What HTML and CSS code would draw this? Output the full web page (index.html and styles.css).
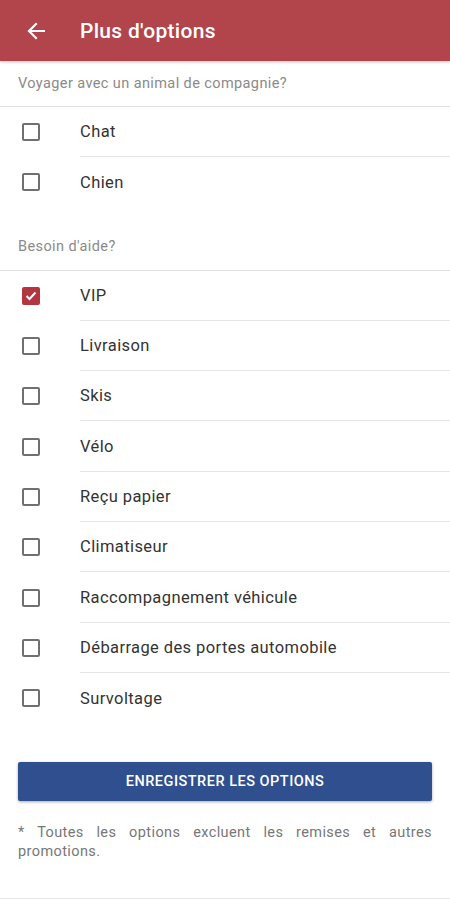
FILE: index.html
```html
<!DOCTYPE html>
<html lang="fr">
<head>
<meta charset="utf-8">
<title>Plus d'options</title>
<link rel="stylesheet" href="styles.css">
</head>
<body>
<header class="appbar">
  <span class="back">
    <svg width="18" height="18" viewBox="0 0 18 18"><path d="M17 9H2.5M9 2L2 9l7 7" fill="none" stroke="#fff" stroke-width="2.2" stroke-linecap="square"/></svg>
  </span>
  <h1 class="title">Plus d'options</h1>
</header>

<div class="section-title first">Voyager avec un animal de compagnie?</div>
<ul class="list">
  <li class="row"><span class="cb"></span><span class="label">Chat</span></li>
  <li class="row"><span class="cb"></span><span class="label">Chien</span></li>
</ul>

<div class="section-title second">Besoin d'aide?</div>
<ul class="list">
  <li class="row"><span class="cb checked"><svg width="12" height="10" viewBox="0 0 12 10"><path d="M1.5 5l3 3 6-6.5" fill="none" stroke="#fff" stroke-width="2"/></svg></span><span class="label">VIP</span></li>
  <li class="row"><span class="cb"></span><span class="label">Livraison</span></li>
  <li class="row"><span class="cb"></span><span class="label">Skis</span></li>
  <li class="row"><span class="cb"></span><span class="label">Vélo</span></li>
  <li class="row"><span class="cb"></span><span class="label">Reçu papier</span></li>
  <li class="row"><span class="cb"></span><span class="label">Climatiseur</span></li>
  <li class="row"><span class="cb"></span><span class="label">Raccompagnement véhicule</span></li>
  <li class="row"><span class="cb"></span><span class="label">Débarrage des portes automobile</span></li>
  <li class="row"><span class="cb"></span><span class="label">Survoltage</span></li>
</ul>

<button class="save">ENREGISTRER LES OPTIONS</button>
<p class="note">* Toutes les options excluent les remises et autres promotions.</p>
<div class="bottom-line"></div>
</body>
</html>
```

FILE: styles.css
```css
html, body {
  margin: 0;
  padding: 0;
  background: #fff;
  font-family: Roboto, "Liberation Sans", sans-serif;
}
.appbar {
  height: 61px;
  background: #b1454b;
  display: flex;
  align-items: center;
  box-shadow: 0 1px 3px rgba(0,0,0,0.25);
  position: relative;
}
.back {
  width: 80px;
  display: flex;
  justify-content: flex-start;
  padding-left: 27px;
  box-sizing: border-box;
  height: 18px;
}
.title {
  margin: 0;
  color: #fff;
  font-size: 21px;
  letter-spacing: 0.3px;
  font-weight: 500;
}
.section-title {
  height: 46px;
  box-sizing: border-box;
  display: flex;
  align-items: center;
  padding-left: 18px;
  font-size: 14.5px;
  letter-spacing: 0.4px;
  color: #8a8a8a;
  border-bottom: 1px solid #e2e2e2;
}
.section-title.second {
  margin-top: 16px;
  height: 47px;
}
.list {
  list-style: none;
  margin: 0;
  padding: 0;
}
.row {
  height: 50.3px;
  display: flex;
}
.cb {
  width: 18px;
  height: 18px;
  box-sizing: border-box;
  border: 2px solid #707070;
  border-radius: 2px;
  margin: auto 22px auto 22px;
  display: flex;
  align-items: center;
  justify-content: center;
  flex: none;
}
.cb.checked {
  background: #b3363f;
  border-color: #b3363f;
}
.label {
  flex: 1;
  margin-left: 18px;
  display: flex;
  align-items: center;
  font-size: 16.5px;
  letter-spacing: 0.4px;
  color: #333;
  border-bottom: 1px solid #e6e6e6;
}
.row:last-child .label {
  border-bottom: none;
}
.save {
  display: block;
  margin: 39px 18px 0;
  width: calc(100% - 36px);
  height: 39px;
  border: none;
  border-radius: 2px;
  background: #2f4f8f;
  color: #fff;
  font-family: Roboto, "Liberation Sans", sans-serif;
  font-size: 14.5px;
  letter-spacing: 0.5px;
  font-weight: 500;
  box-shadow: 0 1px 3px rgba(0,0,0,0.35);
}
.note {
  margin: 22px 18px 0;
  font-size: 14.5px;
  letter-spacing: 0.4px;
  line-height: 19px;
  color: #777;
  text-align: justify;
}
.bottom-line {
  margin-top: 37px;
  border-top: 1px solid #e6e6e6;
}
```
